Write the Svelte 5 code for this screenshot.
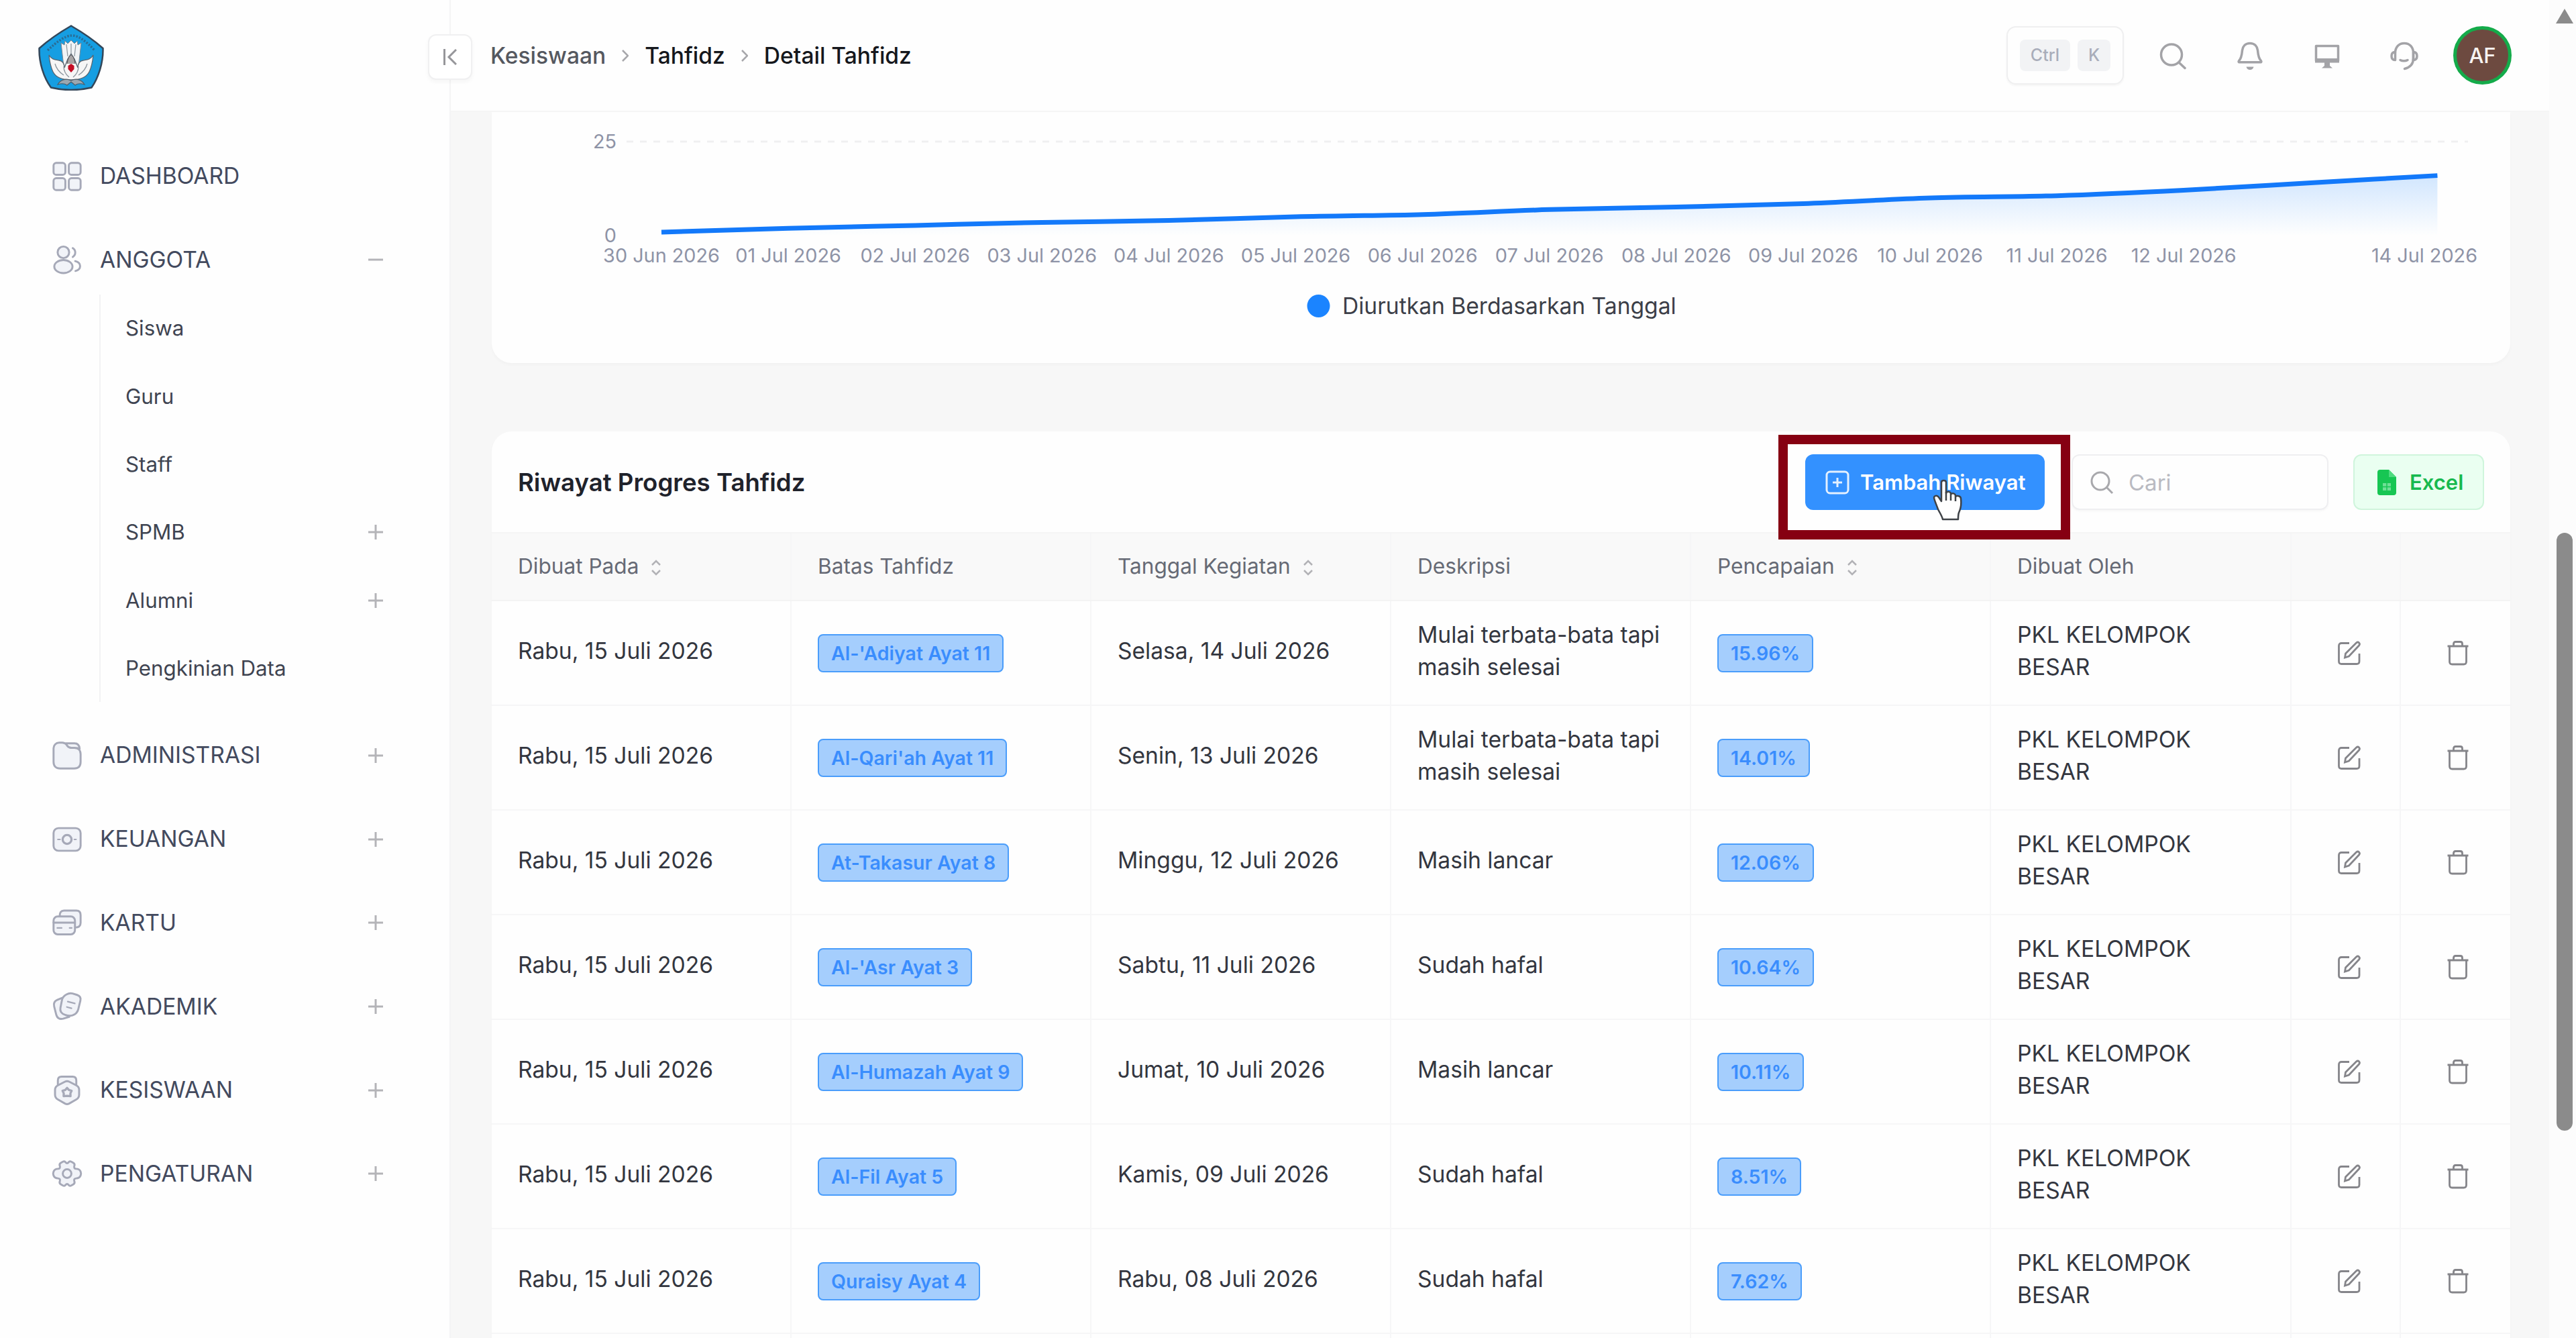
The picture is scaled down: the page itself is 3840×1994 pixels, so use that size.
<script>
  const subMenu = [
    { name: 'Siswa' },
    { name: 'Guru' },
    { name: 'Staff' },
    { name: 'SPMB', more: true },
    { name: 'Alumni', more: true },
    { name: 'Pengkinian Data' }
  ];

  const menu = [
    { name: 'DASHBOARD', icon: 'grid' },
    { name: 'ANGGOTA', icon: 'users', open: true, children: subMenu },
    { name: 'ADMINISTRASI', icon: 'folder', more: true },
    { name: 'KEUANGAN', icon: 'cash', more: true },
    { name: 'KARTU', icon: 'cards', more: true },
    { name: 'AKADEMIK', icon: 'notes', more: true },
    { name: 'KESISWAAN', icon: 'medal', more: true },
    { name: 'PENGATURAN', icon: 'gear', more: true }
  ];

  const columns = [
    { label: 'Dibuat Pada', sort: true },
    { label: 'Batas Tahfidz' },
    { label: 'Tanggal Kegiatan', sort: true },
    { label: 'Deskripsi' },
    { label: 'Pencapaian', sort: true },
    { label: 'Dibuat Oleh' },
    { label: '' },
    { label: '' }
  ];

  const rows = [
    { batas: "Al-'Adiyat Ayat 11", tanggal: 'Selasa, 14 Juli 2026', desk: 'Mulai terbata-bata tapi masih selesai', persen: '15.96%' },
    { batas: "Al-Qari'ah Ayat 11", tanggal: 'Senin, 13 Juli 2026', desk: 'Mulai terbata-bata tapi masih selesai', persen: '14.01%' },
    { batas: 'At-Takasur Ayat 8', tanggal: 'Minggu, 12 Juli 2026', desk: 'Masih lancar', persen: '12.06%' },
    { batas: "Al-'Asr Ayat 3", tanggal: 'Sabtu, 11 Juli 2026', desk: 'Sudah hafal', persen: '10.64%' },
    { batas: 'Al-Humazah Ayat 9', tanggal: 'Jumat, 10 Juli 2026', desk: 'Masih lancar', persen: '10.11%' },
    { batas: 'Al-Fil Ayat 5', tanggal: 'Kamis, 09 Juli 2026', desk: 'Sudah hafal', persen: '8.51%' },
    { batas: 'Quraisy Ayat 4', tanggal: 'Rabu, 08 Juli 2026', desk: 'Sudah hafal', persen: '7.62%' }
  ];

  // chart, in svg units: 0 sits at y 184, 25 at y 44
  const values = [0.9, 1.9, 2.7, 3.5, 4.0, 5.0, 5.6, 6.9, 7.6, 8.5, 10.0, 10.6, 12.06, 14.01, 15.96];
  const startX = 253;
  const stepX = 189.1;
  const points = values.map((v, i) => [startX + i * stepX, 184 - v * 5.6]);

  // each tangent follows the two neighbours of its point
  const slope = (pts, i) => {
    const a = pts[Math.max(i - 1, 0)];
    const b = pts[Math.min(i + 1, pts.length - 1)];
    return (b[1] - a[1]) / (b[0] - a[0]);
  };
  const smooth = (pts) => {
    let d = `M${pts[0][0]} ${pts[0][1]}`;
    for (let i = 1; i < pts.length; i++) {
      const a = pts[i - 1];
      const b = pts[i];
      const h = (b[0] - a[0]) / 3;
      d += ` C${a[0] + h} ${a[1] + h * slope(pts, i - 1)} ${b[0] - h} ${b[1] - h * slope(pts, i)} ${b[0]} ${b[1]}`;
    }
    return d;
  };
  const line = smooth(points);
  const area = `${line} L${points[14][0]} 184 L${startX} 184 Z`;

  const days = ['30 Jun 2026'];
  for (let i = 1; i <= 12; i++) {
    days.push(String(i).padStart(2, '0') + ' Jul 2026');
  }
</script>

{#snippet icon(name)}
  <svg class="icon" viewBox="0 0 24 24">
    {#if name === 'grid'}
      <rect x="1" y="1" width="9.6" height="9.6" rx="2.2" />
      <rect x="13.4" y="1" width="9.6" height="9.6" rx="2.2" />
      <rect x="1" y="13.4" width="9.6" height="9.6" rx="2.2" />
      <rect x="13.4" y="13.4" width="9.6" height="9.6" rx="2.2" />
    {:else if name === 'users'}
      <circle cx="9" cy="6" r="4.7" />
      <ellipse cx="9" cy="17.6" rx="7.4" ry="5.3" />
      <path class="open" d="M16.6 2.6a4.2 4.2 0 0 1 0 7.2M18.6 13.2c2.4.6 4 2.2 4 4s-1.500 3.400-3.800 4" />
    {:else if name === 'folder'}
      <path d="M1 6a4.500 4.500 0 0 1 4.500-4.500h2.600c1.600 0 2.700.7 3.700 1.800l1 1.100c.8.9 1.800 1.400 3.200 1.400H18c3 0 5 2 5 5v6.400c0 3.500-2 5.300-5.300 5.300H6.300C3 22.500 1 20.700 1 17.200z" />
      <path d="M11 2h7c2.500 0 4 1.500 4.200 4.500-1-.6-2.200-.8-4-.8h-2.600c-1.800 0-2.600-.4-3.400-1.500z" />
    {:else if name === 'cash'}
      <rect x="1" y="2.800" width="22" height="18.400" rx="4" />
      <circle cx="12" cy="12" r="3.600" stroke-width="1.800" />
      <path class="thin" d="M4.500 12h1.800M17.900 12h1.400" />
    {:else if name === 'cards'}
      <path d="M6 6.500C6 3.800 7 2.200 9.500 2.200h10c2.300 0 3.500 1.300 3.500 3.600v6.400c0 2.300-1.500 3.800-4.600 3.800z" />
      <rect x="1" y="7" width="17.400" height="14.500" rx="3.400" />
      <path class="open" d="M1 12h17.400" />
      <path class="thin" d="M4 16.300h3.600M14 16.300h1.800" />
    {:else if name === 'notes'}
      <path d="M8 5 4 6.600C1.600 7.600.8 9.300 1.500 12l1.600 6.300c.8 3.200 2.700 4.400 5.700 3.600l5-1.500z" />
      <path d="M11.500 2.200c1.500-.9 3.200-1.300 5-.8l3.700 1.200c2.300.8 3.200 2.400 2.600 4.700l-1.700 7c-.7 2.900-2.100 4-4.700 4.900-2 .6-3.600.5-5.700-.3C7.200 17.800 6 15.900 6.600 13l1.200-6c.5-2.400 1.700-3.800 3.700-4.800z" />
      <path class="thin" d="M12.500 8l5.800 1.500M11.800 12.400l3.800 1" />
    {:else if name === 'medal'}
      <path d="M4.500 8V4c0-2 1-3.200 3-3.200h9c2 0 3 1.200 3 3.200v4" />
      <path d="M10.300 4.900a3.600 3.600 0 0 1 3.400 0l5.800 3c1.500.8 2.300 2 2.300 3.700v4c0 1.700-.8 3-2.300 3.800l-5.800 3.300a3.600 3.600 0 0 1-3.400 0l-5.800-3.300c-1.500-.8-2.300-2.100-2.300-3.800v-4c0-1.700.8-2.900 2.300-3.700z" />
      <path stroke-width="1.800" d="M12 10l1.500 1.700 2.200.6-1 2.100.1 2.300-2.800-.3-2.800.3.1-2.300-1-2.100 2.200-.6z" />
    {:else if name === 'gear'}
      <path d="M8.600 2.300c.9-.5 1.700-.2 2.200.5.700 1 1.700 1 2.400 0 .5-.7 1.300-1 2.200-.5l1.700 1c1 .6 1.200 1.500.8 2.500-.5 1.300.1 2.300 1.500 2.300 1.700 0 3 .9 3.600 2.300.4 1 .4 2.200 0 3.200-.6 1.400-1.900 2.300-3.600 2.300-1.400 0-2 1-1.500 2.300.4 1 .2 1.900-.8 2.500l-1.700 1c-.9.500-1.700.200-2.200-.5-.7-1-1.700-1-2.400 0-.5.700-1.300 1-2.200.5l-1.700-1c-1-.6-1.200-1.500-.8-2.500.5-1.300-.1-2.300-1.500-2.300-1.700 0-3-.9-3.600-2.300-.4-1-.4-2.200 0-3.200.6-1.400 1.900-2.300 3.600-2.300 1.400 0 2-1 1.500-2.300-.4-1-.2-1.900.8-2.500z" />
      <circle cx="12" cy="12" r="3.500" />
    {/if}
  </svg>
{/snippet}

{#snippet toggle(open)}
  <svg class="toggle" viewBox="0 0 22 22">
    <path d={open ? 'M0 11H22' : 'M0 11H22M11 0V22'} />
  </svg>
{/snippet}

<div class="app">
  <aside class="sidebar">
    <svg class="logo" viewBox="0 0 98 98">
      <path d="M49 1.500C62 9 82 22 96.500 35c.5 22-7 44-17 58.500C60 98 38 98 19 93.500 8.500 79 1 57 1.500 35 16 22 36 9 49 1.500z" fill="#169ee2" stroke="#33475a" stroke-width="2.500" />
      <path d="M14 38C28 25 39 17 49 16s22 8 35 22" fill="none" stroke="#2a6d96" stroke-width="3.500" stroke-dasharray="2.500 2" />
      <path d="M38 62 34 27l5 3 1-6 4 4 5-5 5 5 4-4 1 6 5-3-4 35z" fill="#f2f4f6" stroke="#7d8790" stroke-width="1" />
      <path d="M42 29l2 18M49 28v14M56 29l-2 18" stroke="#8b949c" stroke-width="1.200" />
      <path d="M49 82c-10 0-22-2-27-12-3-6-5-15-6-25 4 7 10 7 15 8 6 1 8 6 8 11l5-13 5-8 5 8 5 13c0-5 2-10 8-11 5-1 11-1 15-8-1 10-3 19-6 25-5 10-17 12-27 12z" fill="#f6f6f6" stroke="#596570" stroke-width="1.300" />
      <path d="M38 62c0 7 3 12 8 16M60 62c0 7-3 12-8 16M25 58c2 8 7 13 13 17M73 58c-2 8-7 13-13 17" fill="none" stroke="#8b949c" stroke-width="1.300" />
      <path d="M43 58c1-8 4-13 6-13s5 5 6 13" fill="#a9a5a5" stroke="#4c4c50" />
      <path d="M49 58l4.500 3v5L49 71l-4.500-5v-5z" fill="#c40d24" />
      <path d="M29 89c4-7 12-10 20-6 8-4 16-1 20 6-6-2-10-2-14 1l-6-5-6 5c-4-3-8-3-14-1z" fill="#9ba7b0" stroke="#4d5d69" stroke-width="1.200" />
    </svg>

    <nav>
      {#each menu as item}
        <div class="menu-item">
          {@render icon(item.icon)}
          <span>{item.name}</span>
          {#if item.more || item.open}{@render toggle(item.open)}{/if}
        </div>
        {#if item.children}
          <div class="sub-menu">
            {#each item.children as sub}
              <div class="sub-item">
                <span>{sub.name}</span>
                {#if sub.more}{@render toggle(false)}{/if}
              </div>
            {/each}
          </div>
        {/if}
      {/each}
    </nav>

    <button class="collapse" aria-label="Tutup menu">
      <svg viewBox="0 0 20 24"><path d="M1.500 0v24M19 1 8 12l11 11" /></svg>
    </button>
  </aside>

  <main>
    <header>
      <div class="breadcrumb">
        <span class="muted">Kesiswaan</span>
        <svg viewBox="0 0 10 18"><path d="M1 1l8 8-8 8" /></svg>
        <span>Tahfidz</span>
        <svg viewBox="0 0 10 18"><path d="M1 1l8 8-8 8" /></svg>
        <span>Detail Tahfidz</span>
      </div>
      <div class="tools">
        <div class="shortcut"><kbd>Ctrl</kbd><kbd>K</kbd></div>
        <svg class="tool" viewBox="0 0 44 44">
          <circle cx="20" cy="20.500" r="15.500" /><path d="M31 32l9 8.500" />
        </svg>
        <svg class="tool" viewBox="0 0 44 44">
          <path d="M22 3.500c-7 0-10.800 4.500-11.500 10.500C9.800 22 8.800 26.500 5.600 29.500c-1 1.200-.6 2.300.8 2.300h31.200c1.400 0 1.800-1.100.8-2.300-3.200-3-4.200-7.500-4.900-15.500C32.800 8 29 3.500 22 3.500z" />
          <path class="fill" d="M16.500 38.500h11c-1 3.500-3 4.500-5.500 4.500s-4.500-1-5.500-4.500z" />
        </svg>
        <svg class="tool" viewBox="0 0 44 44">
          <path d="M5.500 7.500h33v22h-33z" />
          <path class="fill" d="M4 26h36v6.500H26v4.500l4 3.500H14l4-3.500v-4.500H4z" />
        </svg>
        <svg class="tool" viewBox="0 0 44 44">
          <path d="M8.500 17C9 9 14 3.500 22 3.500S35 9 35.500 17v9c0 8-5 13.500-13 15.500" />
          <path d="M8.500 16.500v12C5 28.500 3 26.500 3 22.500s2-6 5.500-6zM35.500 16.500v12c3.500 0 5.500-2 5.500-6s-2-6-5.500-6z" />
          <path d="M16 28.500c3 1.800 8 1.800 11 0" />
        </svg>
        <div class="avatar">AF</div>
      </div>
    </header>

    <div class="content">
      <section class="card chart">
        <svg viewBox="0 0 3009 374">
          <defs>
            <linearGradient id="fade" gradientUnits="userSpaceOnUse" x1="0" y1="94" x2="0" y2="184">
              <stop offset="0" stop-color="#1b84ff" stop-opacity=".2" />
              <stop offset="1" stop-color="#1b84ff" stop-opacity="0" />
            </linearGradient>
          </defs>
          <path d="M201 44H2946" stroke="#f0f0f1" stroke-width="3" stroke-dasharray="10 10" />
          <path d={area} fill="url(#fade)" />
          <path d={line} fill="none" stroke="#1379fa" stroke-width="7" />
          <g class="axis">
            <text x="186" y="54" text-anchor="end">25</text>
            <text x="186" y="194" text-anchor="end">0</text>
            {#each days as day, i}
              <text x={startX + i * stepX} y="224" text-anchor="middle">{day}</text>
            {/each}
            <text x="2960" y="224" text-anchor="end">14 Jul 2026</text>
          </g>
          <circle cx="1232.500" cy="289" r="17" fill="#1b84ff" />
          <text class="legend" x="1268" y="301">Diurutkan Berdasarkan Tanggal</text>
        </svg>
      </section>

      <section class="card history">
        <div class="card-head">
          <h3>Riwayat Progres Tahfidz</h3>
          <div class="actions">
            <button class="add">
              <svg viewBox="0 0 36 36">
                <rect x="2" y="2" width="32" height="32" rx="5" /><path d="M18 11v14M11 18h14" />
              </svg>
              <span>Tambah Riwayat</span>
              <span class="highlight"></span>
              <svg class="pointer" viewBox="0 0 46 66">
                <path d="M13 6c0-4 7-4 7 0v16c1-3 7-3 7 1v1c1-3 7-2 7 2v1c2-2 8-1 8 3 1 8 0 15-3 21-1 3-1 6-1 10H15c-1-5-4-9-7-15C6 40 3 34 2 29c0-4 5-4 7-1l4 6z" />
                <path d="M20 20v13M27 24v9M34 27v7" />
              </svg>
            </button>
            <label class="search">
              <svg viewBox="0 0 36 36"><circle cx="16" cy="16" r="13" /><path d="M25.500 25.500 34 34" /></svg>
              <span>Cari</span>
            </label>
            <button class="excel">
              <svg viewBox="0 0 28 38">
                <path d="M4 0h13l11 11v23a4 4 0 0 1-4 4H4a4 4 0 0 1-4-4V4a4 4 0 0 1 4-4z" fill="#17c653" />
                <path d="M17 0v11h11z" fill="#4fdb80" />
                <path d="M8 20h12v11H8z" fill="#6fdf96" />
                <path d="M8 25.500h12M14 20v11" stroke="#17c653" stroke-width="1.500" />
              </svg>
              <span>Excel</span>
            </button>
          </div>
        </div>

        <div class="table">
          <div class="tr thead">
            {#each columns as col}
              <div class="td">
                {col.label}
                {#if col.sort}
                  <svg class="sort" viewBox="0 0 16 24"><path d="M2 8l6-6 6 6M2 16l6 6 6-6" /></svg>
                {/if}
              </div>
            {/each}
          </div>
          {#each rows as row}
            <div class="tr">
              <div class="td"><span>Rabu, 15 Juli 2026</span></div>
              <div class="td badge-cell"><span class="badge">{row.batas}</span></div>
              <div class="td"><span>{row.tanggal}</span></div>
              <div class="td"><span>{row.desk}</span></div>
              <div class="td badge-cell"><span class="badge">{row.persen}</span></div>
              <div class="td"><span>PKL KELOMPOK BESAR</span></div>
              <div class="td act">
                <svg viewBox="0 0 36 38">
                  <path d="M18 4.500H6.500c-2.500 0-4 1.500-4 4v23c0 2.500 1.500 4 4 4h22.500c2.500 0 4-1.500 4-4V20" />
                  <path d="M11.500 26l1-6L28.500 4c3-2.500 6.500 1 4 4L17.500 24z" />
                </svg>
              </div>
              <div class="td act">
                <svg viewBox="0 0 36 38">
                  <path d="M2.500 9h31M11.500 9V5.500c0-2 1-3 3-3h7c2 0 3 1 3 3V9M5.500 9v23c0 2.500 1.500 4 4 4h17c2.500 0 4-1.500 4-4V9" />
                </svg>
              </div>
            </div>
          {/each}
          <div class="tr">
            {#each columns as _}
              <div class="td"></div>
            {/each}
          </div>
        </div>
      </section>
    </div>
  </main>

  <div class="scrollbar">
    <svg viewBox="0 0 26 22"><path d="M13 0 26 22H0z" /></svg>
    <div class="thumb"></div>
    <svg viewBox="0 0 26 22"><path d="M13 22 26 0H0z" /></svg>
  </div>
</div>

<style>
  :global(body) {
    margin: 0;
    background: #fefefe;
  }
  .app {
    display: grid;
    grid-template-columns: 672px 1fr 40px;
    height: 1994px;
    overflow: hidden;
    font-family: Inter, "Liberation Sans", sans-serif;
    font-size: 33.600px;
    color: #3c4252;
  }
  .app * {
    box-sizing: border-box;
  }
  button {
    font: inherit;
  }
  svg {
    flex: none;
    fill: none;
  }

  .sidebar {
    position: relative;
    border-right: 2px solid #f4f4f5;
    background: #fefefe;
  }
  .logo {
    display: block;
    width: 98px;
    height: 98px;
    margin: 37px 0 0 57px;
  }
  nav {
    padding: 76px 99px 0 78px;
  }
  .menu-item {
    display: flex;
    align-items: center;
    height: 103px;
    margin-bottom: 21.700px;
    color: #434a5e;
  }
  .menu-item span {
    margin-top: -2px;
  }
  .menu-item:has(+ .sub-menu) {
    margin-bottom: 0;
  }
  .icon {
    width: 44px;
    height: 44px;
    margin-right: 27px;
    overflow: visible;
    fill: #f1f3f8;
    stroke: #a6a9b8;
    stroke-width: 1.600;
    stroke-linecap: round;
    stroke-linejoin: round;
  }
  .icon .open {
    fill: none;
  }
  .icon .thin {
    fill: none;
    stroke-width: 1.200;
  }
  .toggle {
    width: 22px;
    height: 22px;
    margin-left: auto;
    stroke: #b4b4b8;
    stroke-width: 3;
  }
  .sub-menu {
    margin: 0 0 28px 70px;
    border-left: 2px solid #f2f2f4;
  }
  .sub-item {
    display: flex;
    align-items: center;
    height: 101.300px;
    padding-left: 37px;
    font-size: 31.300px;
    color: #3f4451;
  }
  .collapse {
    position: absolute;
    top: 51px;
    right: -34px;
    z-index: 2;
    display: grid;
    place-items: center;
    width: 66px;
    height: 68px;
    padding: 0;
    border: 2px solid #f0f0f1;
    border-radius: 12px;
    background: #fff;
    box-shadow: 0 3px 6px rgba(0, 0, 0, .04);
  }
  .collapse svg {
    width: 20px;
    height: 24px;
    stroke: #96969a;
    stroke-width: 3;
  }

  main {
    min-width: 0;
    background: #f7f7f7;
  }
  header {
    display: flex;
    align-items: center;
    justify-content: space-between;
    height: 167px;
    padding: 0 56px 0 59px;
    border-bottom: 2px solid #f5f5f5;
    background: #fefefe;
  }
  .breadcrumb {
    display: flex;
    align-items: center;
    gap: 24px;
    font-weight: 500;
    color: #15171c;
  }
  .breadcrumb .muted {
    color: #55585f;
  }
  .breadcrumb svg {
    width: 10px;
    height: 18px;
    stroke: #a7a7ab;
    stroke-width: 2.500;
  }
  .tools {
    display: flex;
    align-items: center;
  }
  .shortcut {
    display: flex;
    align-items: center;
    justify-content: center;
    gap: 11px;
    width: 175px;
    height: 87px;
    margin-right: 51px;
    border: 2px solid #efeff0;
    border-radius: 14px;
    box-shadow: 0 2px 3px rgba(0, 0, 0, .04);
  }
  kbd {
    padding: 0 16px;
    border-radius: 8px;
    background: #f2f3f5;
    font: 500 25px/47px Inter, sans-serif;
    color: #a9adba;
  }
  .tool {
    width: 44px;
    height: 44px;
    margin-right: 71px;
    stroke: #a3a3a7;
    stroke-width: 3.500;
    stroke-linecap: round;
    stroke-linejoin: round;
  }
  .tool:nth-last-child(2) {
    margin-right: 51px;
  }
  .tool .fill {
    fill: #a3a3a7;
    stroke: none;
  }
  .avatar {
    display: grid;
    place-items: center;
    width: 87px;
    height: 87px;
    border: 5px solid #14ab4a;
    border-radius: 50%;
    background: #6d4a40;
    font-size: 31px;
    font-weight: 500;
    color: #f7f3f1;
  }

  .content {
    padding: 0 58px 0 61px;
  }
  .card {
    border-radius: 30px;
    background: #fefefe;
    box-shadow: 0 3px 5px rgba(0, 0, 0, .025);
  }
  .chart {
    height: 374px;
    border-top-left-radius: 0;
    border-top-right-radius: 0;
  }
  .chart svg {
    display: block;
    width: 3009px;
    height: 374px;
  }
  .axis {
    font-size: 28.800px;
    fill: #8e93a6;
  }
  .legend {
    font-size: 33.600px;
    fill: #3c3f48;
  }
  .history {
    margin-top: 102px;
  }
  .card-head {
    display: flex;
    align-items: center;
    justify-content: space-between;
    height: 150px;
    padding: 1px 39px 0;
  }
  h3 {
    margin: 0;
    font-size: 36.600px;
    font-weight: 600;
    color: #1f222b;
  }
  .actions {
    display: flex;
  }
  .actions button,
  .search {
    display: flex;
    align-items: center;
    height: 83px;
    border-radius: 12px;
  }
  .actions button {
    font-size: 31px;
    font-weight: 600;
  }
  .add {
    position: relative;
    width: 357px;
    padding: 0 0 0 30px;
    border: 0;
    background: #3391ff;
    color: #fff;
    white-space: nowrap;
  }
  .add svg {
    width: 36px;
    height: 36px;
    margin-right: 16px;
    stroke: #e3f0ff;
    stroke-width: 3;
  }
  .highlight {
    position: absolute;
    top: -29px;
    right: -38px;
    bottom: -44px;
    left: -40px;
    z-index: 1;
    border: 14px solid #860012;
  }
  .add .pointer {
    position: absolute;
    top: 36px;
    left: 190px;
    z-index: 2;
    width: 46px;
    height: 66px;
    margin: 0;
    fill: #fff;
    stroke: #3e4247;
    stroke-width: 2.500;
    stroke-linejoin: round;
  }
  .search {
    width: 383px;
    margin: 0 37px 0 40px;
    padding-left: 25px;
    border: 2px solid #efeff1;
    box-shadow: 0 2px 3px rgba(0, 0, 0, .03);
  }
  .search svg {
    width: 36px;
    height: 36px;
    margin-right: 22px;
    stroke: #a8a8ac;
    stroke-width: 3;
  }
  .search span {
    font-size: 33px;
    color: #b9bac1;
  }
  .excel {
    width: 195px;
    padding: 0 0 0 34px;
    border: 2px solid #cff5dc;
    background: #eafff1;
    color: #17b94f;
  }
  .excel svg {
    width: 28px;
    height: 38px;
    margin-right: 20px;
  }

  .tr {
    display: grid;
    grid-template-columns: 447px 447px 447px 447px 447px 448px 163px 1fr;
    height: 156px;
    border-bottom: 2px solid #f6f6f7;
  }
  .td {
    display: flex;
    align-items: center;
    padding: 0 36px 7px 39px;
    border-right: 2px solid #f6f6f7;
    line-height: 48px;
    color: #33363f;
  }
  .td:last-child {
    border-right: 0;
  }
  .thead {
    height: 103px;
    border-top: 2px solid #f5f5f5;
    border-bottom-color: #f3f3f3;
    background: #f9f9f9;
  }
  .thead .td {
    padding-bottom: 1px;
    font-size: 31.600px;
    color: #666a75;
  }
  .sort {
    width: 16px;
    height: 24px;
    margin: 4px 0 0 18px;
    stroke: #b2b2b6;
    stroke-width: 2.500;
  }
  .td.badge-cell {
    padding-bottom: 0;
  }
  .badge {
    padding: 0 18px;
    border: 2.500px solid #4a9dfb;
    border-radius: 8px;
    background: #a5cefd;
    font-size: 28.500px;
    font-weight: 600;
    line-height: 53px;
    color: #3a8dfd;
    white-space: nowrap;
  }
  .td.act {
    justify-content: center;
    padding: 0 0 0 10px;
  }
  .td.act:last-child {
    padding-left: 7px;
  }
  .act svg {
    width: 36px;
    height: 38px;
    stroke: #85858a;
    stroke-width: 2.800;
  }

  .scrollbar {
    display: flex;
    flex-direction: column;
    align-items: center;
    padding: 13px 0 4px 6px;
    background: #fcfcfc;
  }
  .scrollbar svg {
    width: 26px;
    height: 22px;
    fill: #8b8b8b;
  }
  .thumb {
    width: 24px;
    height: 891px;
    margin: 759px 0 auto;
    border-radius: 12px;
    background: #8b8b8b;
  }
</style>
